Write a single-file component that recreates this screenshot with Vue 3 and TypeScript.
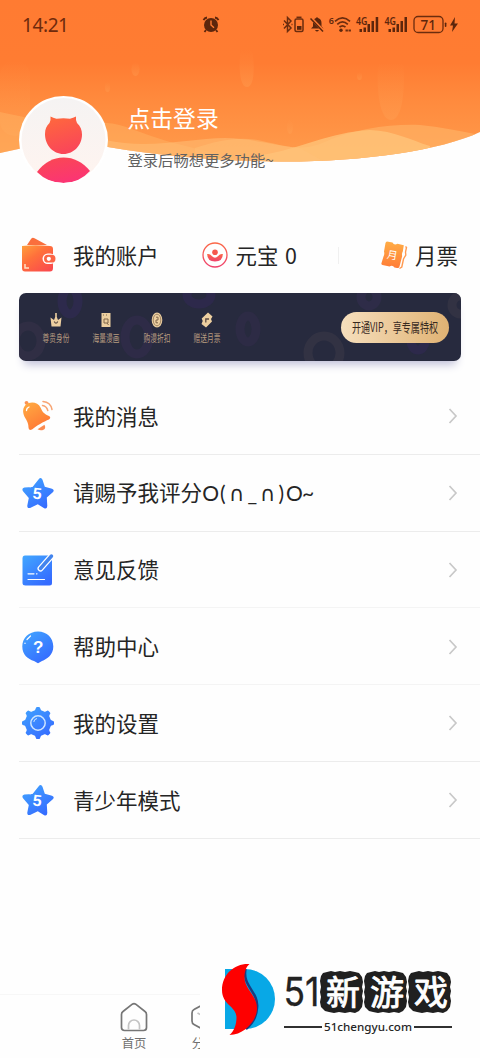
<script setup lang="ts">
type IconName = 'bell' | 'star' | 'note' | 'help' | 'gear'

interface MenuItem {
  label: string
  icon: IconName
  wide?: boolean
}

interface Perk {
  label: string
  icon: 'crown' | 'comic' | 'coin' | 'ticket'
}

const menu: MenuItem[] = [
  { label: '我的消息', icon: 'bell' },
  { label: '请赐予我评分O(∩_∩)O~', icon: 'star', wide: true },
  { label: '意见反馈', icon: 'note' },
  { label: '帮助中心', icon: 'help' },
  { label: '我的设置', icon: 'gear' },
  { label: '青少年模式', icon: 'star' },
]

const perks: Perk[] = [
  { label: '尊贵身份', icon: 'crown' },
  { label: '海量漫画', icon: 'comic' },
  { label: '购漫折扣', icon: 'coin' },
  { label: '赠送月票', icon: 'ticket' },
]

const sealWords = ['新', '游', '戏']
const teeth = [0, 45, 90, 135, 180, 225, 270, 315]
</script>

<template>
  <main class="screen">
    <header class="hero">
      <svg class="hero-bg" width="480" height="200" viewBox="0 0 480 200">
        <defs>
          <linearGradient id="sky" x1="0" y1="0" x2="0" y2="1">
            <stop offset="0" stop-color="#ff7b32" />
            <stop offset=".38" stop-color="#ff7c32" />
            <stop offset=".62" stop-color="#ff8b3e" />
            <stop offset="1" stop-color="#ff9d4d" />
          </linearGradient>
          <linearGradient id="drop" x1="0" y1="0" x2="0" y2="1">
            <stop offset="0" stop-color="#ffa557" stop-opacity="0" />
            <stop offset="1" stop-color="#ffa75b" stop-opacity=".3" />
          </linearGradient>
          <clipPath id="heroClip">
            <path d="M0 0H480V132C440 151 360 162 280 161.500C225 161 165 157 108 147C75 141 40 143 0 153Z" />
          </clipPath>
        </defs>
        <g clip-path="url(#heroClip)">
          <rect width="480" height="165" fill="url(#sky)" />
          <rect x="0" y="60" width="30" height="76" rx="15" fill="url(#drop)" />
          <path d="M379 62H403C405 75 405 120 391 120S376 75 379 62Z" fill="url(#drop)" />
          <path d="M241 50H252C254 58 256 87 247 87S239 58 241 50Z" fill="url(#drop)" />
          <ellipse cx="135.500" cy="69" rx="4" ry="7" fill="url(#drop)" />
          <ellipse cx="107.500" cy="87" rx="2.500" ry="5" fill="url(#drop)" />
          <ellipse cx="359.500" cy="76" rx="2.500" ry="4" fill="url(#drop)" />
          <ellipse cx="290" cy="127" rx="3" ry="7" fill="url(#drop)" />
          <path d="M0 112C35 119 55 126 95 123C120 121 130 130 170 142L260 165H0Z" fill="#ffb566" opacity=".45" />
          <path d="M195 148C220 140 240 136 262 141C285 146 300 151 320 144C355 128 390 124 420 125C440 127 460 131 480 135V165H195Z" fill="#ffb669" opacity=".6" />
          <path d="M262 155C300 149 330 132 370 130C395 131 410 140 430 146V165H262Z" fill="#ffc57b" opacity=".75" />
          <path d="M105 140C150 150 190 138 225 138C250 138 270 145 300 148L330 165H105Z" fill="#ffc17a" opacity=".5" />
        </g>
      </svg>

      <div class="status">
        <time class="clock">14:21</time>
        <svg class="alarm" width="18" height="18" viewBox="0 0 18 18">
          <g fill="none" stroke="#5d260c" stroke-width="1.800">
            <path d="M1.500 4.200Q2.500 2 5 1.500M16.500 4.200Q15.500 2 13 1.500M4 14l-1.500 2M14 14l1.500 2" />
          </g>
          <circle cx="9" cy="9" r="7" fill="#5d260c" />
          <path d="M9 4.500V9l3 2.700" fill="none" stroke="#ff7b32" stroke-width="1.400" />
        </svg>
        <svg class="system" width="180" height="24" viewBox="280 13 180 24">
          <g fill="none" stroke="#6b2c0e" stroke-width="1.500">
            <path d="M284 20.500l7 7.500-3.500 3.500V17.500L291 21l-7 7.500M283 24.500h1M291.500 24.500h1" />
            <rect x="295" y="19" width="8" height="12.500" rx="1.500" />
            <path d="M296.500 17.300h5" />
            <path d="M335 21.300Q342.500 14.500 350 21.300M337.300 24.300Q342.500 19.500 347.800 24.300M339.500 27.200Q342.500 24.500 345.500 27.200" stroke-width="1.700" />
            <path d="M345.500 30.500h5.500" stroke-width="2" stroke-dasharray="2.400 .6" />
            <rect x="414" y="16.500" width="29" height="16" rx="4" stroke-width="1.300" />
          </g>
          <g fill="#5d260c">
            <rect x="297" y="26" width="4.500" height="3.800" />
            <path d="M311 28.500l2-2V23q0-4 3-5l1-1 1 1q3.500 1 3.500 5v3.500l2 2zM315 30h4q-2 3-4 0z" />
            <circle cx="341" cy="30.300" r="1.700" />
            <rect x="359.500" y="29" width="2.500" height="3" />
            <rect x="363.500" y="27.500" width="2.500" height="4.500" />
            <rect x="367.500" y="24" width="2.500" height="8" />
            <rect x="371.500" y="21" width="2.500" height="11" />
            <rect x="375.700" y="17" width="2.500" height="15" />
            <rect x="388.500" y="29" width="2.500" height="3" />
            <rect x="392.500" y="27.500" width="2.500" height="4.500" />
            <rect x="396.500" y="24" width="2.500" height="8" />
            <rect x="400.500" y="21" width="2.500" height="11" />
            <rect x="404.500" y="17" width="2.500" height="15" />
            <rect x="444.800" y="22.500" width="1.600" height="4.500" rx=".8" />
            <path d="M455 17l-5 8.500h3l-1 6.500 6-8.500h-3.500z" />
            <text x="328.700" y="24" font-size="9" font-weight="600">6</text>
            <text x="356" y="25" font-size="10.500" font-weight="600" textLength="11.500" lengthAdjust="spacingAndGlyphs">4G</text>
            <text x="384.500" y="25" font-size="10.500" font-weight="600" textLength="11.500" lengthAdjust="spacingAndGlyphs">4G</text>
            <text x="420.500" y="29.800" font-size="14" font-weight="500" textLength="15.500" lengthAdjust="spacingAndGlyphs">71</text>
          </g>
          <path d="M310.500 17.500l13 13.500" stroke="#ff7b32" stroke-width="3" />
          <path d="M310.500 18.500l12.500 13" stroke="#5d260c" stroke-width="1.500" />
        </svg>
      </div>

      <div class="profile">
        <svg class="avatar" width="90" height="88" viewBox="0 0 90 88">
          <defs>
            <linearGradient id="face" x1="0" y1="0" x2=".3" y2="1">
              <stop offset="0" stop-color="#ff6a3b" />
              <stop offset="1" stop-color="#fa4758" />
            </linearGradient>
            <linearGradient id="body" x1="0" y1="0" x2=".4" y2="1">
              <stop offset="0" stop-color="#fa4951" />
              <stop offset="1" stop-color="#fb3573" />
            </linearGradient>
            <linearGradient id="plate" x1="0" y1="0" x2="0" y2="1">
              <stop offset="0" stop-color="#f5f3f3" />
              <stop offset="1" stop-color="#fff4ef" />
            </linearGradient>
            <clipPath id="plateClip"><ellipse cx="44.500" cy="44" rx="44" ry="43" /></clipPath>
          </defs>
          <ellipse cx="44.500" cy="44" rx="44.500" ry="44" fill="#fff" />
          <ellipse cx="44.500" cy="44" rx="42" ry="42" fill="url(#plate)" />
          <path d="M26 38C26 33 27.500 30 30.500 27Q32 24 31.500 20.500Q34 22 37.500 22.800Q44.500 21.500 51 22.800Q54 22 57 20.500Q56.500 24 58 27C61.500 30 63 34 63 38.500C63 49 55 58 44.500 58S26 49 26 38Z" fill="url(#face)" />
          <path d="M18 76Q29 61.500 44.500 61.500T71 75Q60 87 44.500 87T18 76Z" fill="url(#body)" clip-path="url(#plateClip)" />
        </svg>
        <div class="greeting">
          <h1>点击登录</h1>
          <p>登录后畅想更多功能~</p>
        </div>
      </div>
    </header>

    <section class="wallet">
      <div class="account">
        <svg width="34" height="36" viewBox="0 0 34 36">
          <defs>
            <linearGradient id="purse" x1="0" y1="0" x2=".8" y2="1">
              <stop offset="0" stop-color="#ffa03c" />
              <stop offset=".45" stop-color="#ff703b" />
              <stop offset="1" stop-color="#fa4b4d" />
            </linearGradient>
          </defs>
          <path d="M6 8L10 2Q11.500 0 13.500 1.300L26 8Z" fill="#fa6f3d" />
          <path d="M1 9Q14 7.500 29 9Q32 9 32 12V31Q32 34.500 29 34.500H4Q1 34.500 1 31Z" fill="url(#purse)" />
          <rect x="21.500" y="16.500" width="13" height="10.500" rx="5.200" fill="#fff" />
          <rect x="23" y="17.800" width="11.500" height="7.800" rx="3.900" fill="#fc6545" />
          <circle cx="27.800" cy="21.800" r="2.100" fill="#fff" />
          <path d="M4 27v4h4" fill="none" stroke="#ffe0c4" stroke-width="1.500" />
        </svg>
        <span>我的账户</span>
      </div>
      <div class="ingot">
        <svg width="28" height="28" viewBox="0 0 28 28">
          <defs>
            <linearGradient id="ingot" x1="0" y1="0" x2="0" y2="1">
              <stop offset="0" stop-color="#fb6847" />
              <stop offset="1" stop-color="#ef426d" />
            </linearGradient>
          </defs>
          <circle cx="14" cy="14" r="12" fill="none" stroke="url(#ingot)" stroke-width="1.300" />
          <circle cx="14" cy="11.300" r="2.800" fill="#f5584d" />
          <path d="M6.200 13Q9 12.500 10.800 15Q14 18.500 17.200 15Q19 12.500 21.800 13Q22 20.500 14 20.500T6.200 13Z" fill="url(#ingot)" />
        </svg>
        <span class="amount">元宝 0</span>
      </div>
      <div class="monthly">
        <svg width="28" height="30" viewBox="0 0 28 30">
          <defs>
            <linearGradient id="pass" x1="0" y1="0" x2="0" y2="1">
              <stop offset="0" stop-color="#ffad45" />
              <stop offset="1" stop-color="#ff7c37" />
            </linearGradient>
          </defs>
          <path d="M25.500 6.500L26.500 7.500 25.500 12 25.800 15 23.500 19 21.800 27 19.500 28.500" fill="none" stroke="#ff9a52" stroke-width="1.400" />
          <path d="M7 1.500L12.500 2.500Q14 5.500 17.500 3.800L23.800 5.200 22.800 11.500Q21.500 14 22.200 16L19.500 26.500Q19 28.500 17 28L14.500 27.500Q12.500 24.500 9.500 26.500L2.500 25Q1 24.500 1.500 23L3.500 16.500Q4.800 14 4 11.500L5.500 3Q6 1.500 7 1.500Z" fill="url(#pass)" />
          <text x="7" y="19" font-size="10.500" fill="#fff" transform="rotate(10 12 15)">月</text>
        </svg>
        <span>月票</span>
      </div>
    </section>

    <section class="vip">
      <svg class="rings" width="442" height="68" viewBox="0 0 442 68">
        <g fill="none" stroke-width="9">
          <ellipse cx="51" cy="8" rx="8" ry="13" stroke="#2d2a4c" />
          <ellipse cx="9" cy="48" rx="13" ry="15" stroke="#302e44" />
          <ellipse cx="118" cy="44" rx="12" ry="17" stroke="#2e2b47" />
          <ellipse cx="180" cy="2" rx="12" ry="9" stroke="#2d294b" />
          <ellipse cx="229" cy="36" rx="8" ry="13" stroke="#2d2b45" />
          <ellipse cx="305" cy="60" rx="16" ry="17" stroke="#323243" />
          <ellipse cx="350" cy="4" rx="8" ry="9" stroke="#2e2c48" />
          <ellipse cx="441" cy="12" rx="8" ry="9" stroke="#323243" />
          <ellipse cx="399" cy="48" rx="7" ry="9" stroke="#2d294b" />
        </g>
      </svg>
      <ul class="perks">
        <li v-for="perk in perks" :key="perk.label">
          <svg width="36" height="36" viewBox="0 0 36 36">
            <g transform="translate(18 10)" fill="#edcfa0">
              <g v-if="perk.icon === 'crown'">
                <path d="M-5.500-2.500l3.500 2.500 1.200-3V-7h1.600v4l1.200 3 3.500-2.500-1 9h-9z" />
                <path d="M-1.800 1.500Q0 5 1.800 1.500" fill="none" stroke="#5e4c43" stroke-width="1.100" />
              </g>
              <g v-else-if="perk.icon === 'comic'">
                <rect x="-4.500" y="-7" width="9" height="14" />
                <path d="M-3-5h1M0-5h1M-2-1h4v4h-4zM1 3l1.500 2" fill="none" stroke="#80664b" stroke-width="1" />
              </g>
              <g v-else-if="perk.icon === 'coin'">
                <ellipse rx="5.300" ry="7.500" />
                <ellipse rx="3.800" ry="5.800" fill="none" stroke="#80664b" stroke-width=".7" />
                <path d="M-1-2.800h2v2.800h-2v2.800h2" fill="none" stroke="#80664b" stroke-width="1" />
              </g>
              <g v-else>
                <path d="M1-7.500l4.500 4L4-1l1 2.500L-1 7.500-5.500 4l1.200-3-1-2.500z" />
                <path d="M-1.200 2.500V-1H2" fill="none" stroke="#5e4c43" stroke-width="1.300" />
              </g>
            </g>
            <text x="4.600" y="31.800" font-size="9.800" fill="#b79c80" textLength="26.800" lengthAdjust="spacingAndGlyphs">{{ perk.label }}</text>
          </svg>
        </li>
      </ul>
      <button class="join" type="button">
        <svg width="88" height="20" viewBox="0 0 88 20">
          <text x="1" y="14.500" font-size="12.800" fill="#37291f" textLength="86" lengthAdjust="spacingAndGlyphs">开通VIP，享专属特权</text>
        </svg>
      </button>
    </section>

    <svg width="0" height="0" class="defs">
      <defs>
        <linearGradient id="blue" x1="0" y1="0" x2=".7" y2="1">
          <stop offset="0" stop-color="#42a7ff" />
          <stop offset="1" stop-color="#356bff" />
        </linearGradient>
        <linearGradient id="amber" x1="0" y1="0" x2=".6" y2="1">
          <stop offset="0" stop-color="#ffad42" />
          <stop offset="1" stop-color="#ff7635" />
        </linearGradient>
        <clipPath id="gear">
          <circle cx="17" cy="17" r="13" />
          <path v-for="angle in teeth" :key="angle" d="M11.500 5.500Q14.500 4.500 14.700 2.500Q14.900 1 16 1H18Q19.100 1 19.300 2.500Q19.500 4.500 22.500 5.500Z" :transform="`rotate(${angle} 17 17)`" />
        </clipPath>
      </defs>
    </svg>

    <nav class="menu">
      <a v-for="item in menu" :key="item.label" class="row">
        <svg class="icon" width="34" height="34" viewBox="0 0 34 34">
          <g v-if="item.icon === 'bell'">
            <circle cx="5.500" cy="3.800" r="1.900" fill="#fb9154" />
            <path d="M16.500 30.200l7-4.500q1.800 3.500-1 5t-6-.5z" fill="#fb8b51" />
            <path d="M4.500 6C9 2 17 3 19.500 8.500C21.500 13 23 15 28 17Q30.500 18.500 28 20.500C23 22.500 15 27 11 30.500Q7.500 32 7.500 28.500C7.500 21.500 3 19 2.300 14Q1.500 9 4.500 6Z" fill="url(#amber)" />
            <path d="M5.500 11.500q0-2.500 2.500-3.500" fill="none" stroke="#fff" stroke-width="1.300" stroke-linecap="round" />
            <path d="M22 2.500Q29.500 3 31 10.500M21.500 6.500Q25.500 7 26.800 11.500" fill="none" stroke="#f7a473" stroke-width="1.500" stroke-linecap="round" />
          </g>
          <g v-else-if="item.icon === 'star'">
            <path d="M17.500 3.500Q20 .5 21.500 3.800L23.800 10.800 31 12.700Q34 14 31.800 16.300L25.800 21.500 26.300 30Q26 33.500 23.200 32.300L16.800 28.300 9 32Q6 32.500 6.300 29.500L7.800 22 1.800 15Q.5 12 3.500 11.500L11.500 11Z" fill="url(#blue)" />
            <path d="M11.500 9.500L14.500 5.500M9.200 10.800l.7-.5" stroke="#fff" stroke-width="1.200" stroke-linecap="round" />
            <text class="digit" x="11.800" y="23.200" font-size="16" font-weight="700" fill="#fff" transform="rotate(6 17 17)">5</text>
          </g>
          <g v-else-if="item.icon === 'note'">
            <path d="M4 2.500H31V30Q31 32.500 28.500 32.500H4.500Q1.500 32.500 1.500 30V5.500Q1.500 2.500 4 2.500Z" fill="url(#blue)" />
            <path d="M19.500 15.500L30.500 3" stroke="#fff" stroke-width="6" stroke-linecap="round" />
            <path d="M19.500 15.500L30.500 3" stroke="#4384ed" stroke-width="3.500" stroke-linecap="round" />
            <path d="M7 20.800h6M15.500 20.800h.5M7 26.500h16.500" stroke="#fff" stroke-width="1.200" stroke-linecap="round" />
          </g>
          <g v-else-if="item.icon === 'help'">
            <path d="M17 1.500C26 1.500 32.300 8 32.300 16.500C32.300 25 26 29 21 31L17.500 33Q17 33.300 16.500 33L13 31C7 29 1.300 25 1.300 16.500C1.300 8 8 1.500 17 1.500Z" fill="url(#blue)" />
            <text class="digit" x="12" y="22.500" font-size="17" font-weight="600" fill="#fff">?</text>
            <path d="M6 9.500L9.500 6M4 13.500v-.5" stroke="#fff" stroke-width="1.200" stroke-linecap="round" />
          </g>
          <g v-else>
            <rect width="34" height="34" fill="url(#blue)" clip-path="url(#gear)" />
            <circle cx="17" cy="17" r="7.200" fill="none" stroke="#cfe6ff" stroke-width="1.500" />
            <path d="M12.800 16Q13 13 16 12.500" fill="none" stroke="#cfe6ff" stroke-width="1" />
          </g>
        </svg>
        <svg v-if="item.wide" class="label" width="246" height="34" viewBox="0 0 246 34">
          <text x="0" y="25.300" font-size="21.500" fill="#252525" textLength="129" lengthAdjust="spacingAndGlyphs">请赐予我评分</text>
          <text class="latin" y="25" font-size="21" fill="#252525"><tspan x="129.300 147">O(</tspan><tspan class="cap" x="155.700">∩</tspan><tspan x="174.500">_</tspan><tspan class="cap" x="186.700">∩</tspan><tspan x="205.500 213 229">)O~</tspan></text>
        </svg>
        <span v-else class="label">{{ item.label }}</span>
        <svg class="chevron" width="10" height="18" viewBox="0 0 10 18">
          <path d="M1.500 2L8 9 1.500 16" fill="none" stroke="#c8c8c8" stroke-width="1.700" />
        </svg>
      </a>
    </nav>

    <footer class="bottom">
      <div class="tabs">
        <div class="tab">
          <svg width="28" height="30" viewBox="0 0 28 30">
            <path d="M12.300 2.200Q14 1 15.700 2.200L25 9.500Q26.500 10.500 26.500 12.500V25.500Q26.500 28.500 23.500 28.500H4.500Q1.500 28.500 1.500 25.500V12.500Q1.500 10.500 3 9.500Z" fill="none" stroke="#767676" stroke-width="1.700" />
            <path d="M8.500 27.500V23.500a5.500 5.500 0 0 1 11 0V27.500" fill="none" stroke="#c4c4c4" stroke-width="1.700" />
          </svg>
          <span>首页</span>
        </div>
        <div class="tab">
          <svg width="28" height="30" viewBox="0 0 28 30">
            <path d="M14 2L24 7.500Q26 8.500 26 11V19Q26 21.500 24 22.500L14 28 4 22.500Q2 21.500 2 19V11Q2 8.500 4 7.500Z" fill="none" stroke="#767676" stroke-width="1.700" />
            <path d="M7.500 11L14 14.500 20.500 11" fill="none" stroke="#c4c4c4" stroke-width="1.700" />
          </svg>
          <span>分类</span>
        </div>
      </div>

      <div class="brand">
        <svg class="mark" width="56" height="74" viewBox="0 0 56 74">
          <path d="M5 7H25A30 30 0 0 1 25 67H5Z" fill="#08a8e6" />
          <path d="M25.500 7C22 24 39 30 37 46C36.500 56 32 62 26 67" fill="none" stroke="#193c80" stroke-width="2.500" />
          <path d="M29.500 2C15 1 2 12 2 28C2 43 16 44 16.500 55C16.500 63 14 69 9.500 73C24 73 36.500 59 37 47C37.500 33 24.500 28 24.500 15C24.500 10 26 5 29.500 2Z" fill="#fe0000" />
        </svg>
        <div class="wordmark">
          <div class="name">
            <svg class="fifty-one" width="37" height="46" viewBox="0 0 37 46">
              <text x="-.5" y="37" font-size="39.500" fill="#222" stroke="#222" stroke-width=".3" textLength="36" lengthAdjust="spacingAndGlyphs">51</text>
            </svg>
            <svg v-for="word in sealWords" :key="word" class="seal" width="44" height="46" viewBox="0 0 44 46">
              <path d="M6 3l4-1 4 1 5-1 5 1 5-1 5 1 4 1 3 4 1 5-1 5 1 4-1 5 1 5-1 6-3 4-4 2-5-1-5 1-6-1-5 1-5-1-4-1-4-4-1-5 1-5-1-5 1-5-1-6 1-5 2-3z" fill="#202020" />
              <text x="5" y="35.500" font-size="34" fill="#fff" stroke="#fff" stroke-width=".9" stroke-linejoin="round">{{ word }}</text>
            </svg>
          </div>
          <div class="domain">
            <i></i>
            <svg width="90" height="18" viewBox="0 0 90 18">
              <text x="1" y="12.500" font-size="11.500" font-weight="500" fill="#252525" textLength="88" lengthAdjust="spacingAndGlyphs">51chengyu.com</text>
            </svg>
            <i></i>
          </div>
        </div>
      </div>
    </footer>
  </main>
</template>

<style>
body {
  background: #fefefe;
}
</style>

<style scoped>
.screen {
  position: relative;
  display: flex;
  flex-direction: column;
  width: 480px;
  height: 1058px;
  overflow: hidden;
  background: #fefefe;
  color: #252525;
  font-family: "Noto Sans", "Noto Sans CJK SC", sans-serif;
}
svg {
  display: block;
  flex: none;
  overflow: visible;
}
.defs {
  position: absolute;
}
.hero {
  position: relative;
  height: 217px;
  flex: none;
}
.hero-bg {
  position: absolute;
  top: 0;
  left: 0;
}
.status {
  position: relative;
  display: flex;
  align-items: center;
  height: 50px;
}
.clock {
  width: 180px;
  padding-left: 22px;
  font-size: 19px;
  letter-spacing: -0.4px;
  color: #6f2a0c;
}
.alarm {
  margin-right: 60px;
}
.system {
  font-family: "Noto Sans", sans-serif;
}
.profile {
  position: relative;
  display: flex;
  margin: 46px 0 0 19px;
}
.greeting {
  padding: 4px 0 0 18.500px;
}
h1 {
  margin: 0;
  font: 400 22.800px/36px "Noto Sans CJK SC", sans-serif;
  color: #fff;
}
p {
  margin: 11px 0 0;
  font: 400 15.300px/24px "Noto Sans CJK SC", sans-serif;
  color: #616161;
}
.wallet {
  display: flex;
  align-items: center;
  height: 76px;
  flex: none;
  font: 400 21.400px/30px "Noto Sans CJK SC", sans-serif;
}
.account,
.ingot,
.monthly {
  display: flex;
  align-items: center;
}
.account {
  width: 180px;
  padding-left: 21px;
  gap: 18px;
}
.ingot {
  width: 137px;
  height: 17px;
  gap: 6.500px;
  border-right: 1px solid #f0f0f0;
}
.amount {
  word-spacing: 2px;
}
.monthly {
  padding-left: 41px;
  gap: 7px;
}
.vip {
  position: relative;
  display: flex;
  align-items: center;
  width: 442px;
  height: 68px;
  margin: 0 19px;
  flex: none;
  border-radius: 7px;
  background: #272a3e;
  box-shadow: 0 8px 10px -5px #b9b9d4;
}
.rings {
  position: absolute;
  inset: 0;
  overflow: hidden;
  border-radius: 7px;
}
.perks {
  position: relative;
  display: flex;
  gap: 14.400px;
  margin: 0;
  padding: 1px 0 0 19px;
  list-style: none;
}
.join {
  position: relative;
  display: flex;
  align-items: center;
  justify-content: center;
  width: 108px;
  height: 31px;
  margin: 0 12px 0 auto;
  padding: 0;
  border: 0;
  border-radius: 16px;
  background: linear-gradient(90deg, #f6dfbd, #e0b273);
  font-family: "Noto Sans CJK SC", sans-serif;
}
.menu {
  padding: 17px 0 0 19px;
  flex: none;
}
.row {
  display: flex;
  align-items: center;
  box-sizing: border-box;
  height: 76.750px;
  padding-left: 2px;
  border-bottom: 1px solid #ececec;
}
.row:nth-child(3),
.row:nth-child(4) {
  border-bottom-color: #f4f4f4;
}
.icon {
  margin-top: 1px;
}
.label {
  margin-left: 18px;
  font: 400 21.500px/30px "Noto Sans CJK SC", sans-serif;
}
.latin {
  font-family: Lato, sans-serif;
}
.cap {
  font-family: "DejaVu Sans", sans-serif;
}
.digit {
  font-family: "Liberation Sans", sans-serif;
}
.chevron {
  margin: 1px 22px 0 auto;
}
.bottom {
  display: flex;
  margin-top: auto;
  height: 108px;
  flex: none;
}
.tabs {
  display: flex;
  box-sizing: border-box;
  width: 200px;
  height: 64px;
  margin-top: 44px;
  padding: 7px 0 0 99px;
  overflow: hidden;
  border-top: 1px solid #f7f7f7;
}
.tab {
  display: flex;
  flex: none;
  flex-direction: column;
  align-items: center;
  width: 70px;
  font: 400 12.300px/18px "Noto Sans CJK SC", sans-serif;
  color: #707070;
}
.tab span {
  margin-top: 2px;
}
.brand {
  display: flex;
  width: 280px;
  padding: 12px 0 0 20px;
  box-sizing: border-box;
}
.wordmark {
  padding: 7px 0 0 8px;
}
.name {
  display: flex;
}
.fifty-one {
  font-family: Inter, sans-serif;
}
.domain {
  display: flex;
  align-items: center;
  gap: 1px;
  margin-top: 3px;
  font-family: "Noto Sans", sans-serif;
}
.domain i {
  width: 38px;
  height: 2px;
  background: #303030;
}
</style>
